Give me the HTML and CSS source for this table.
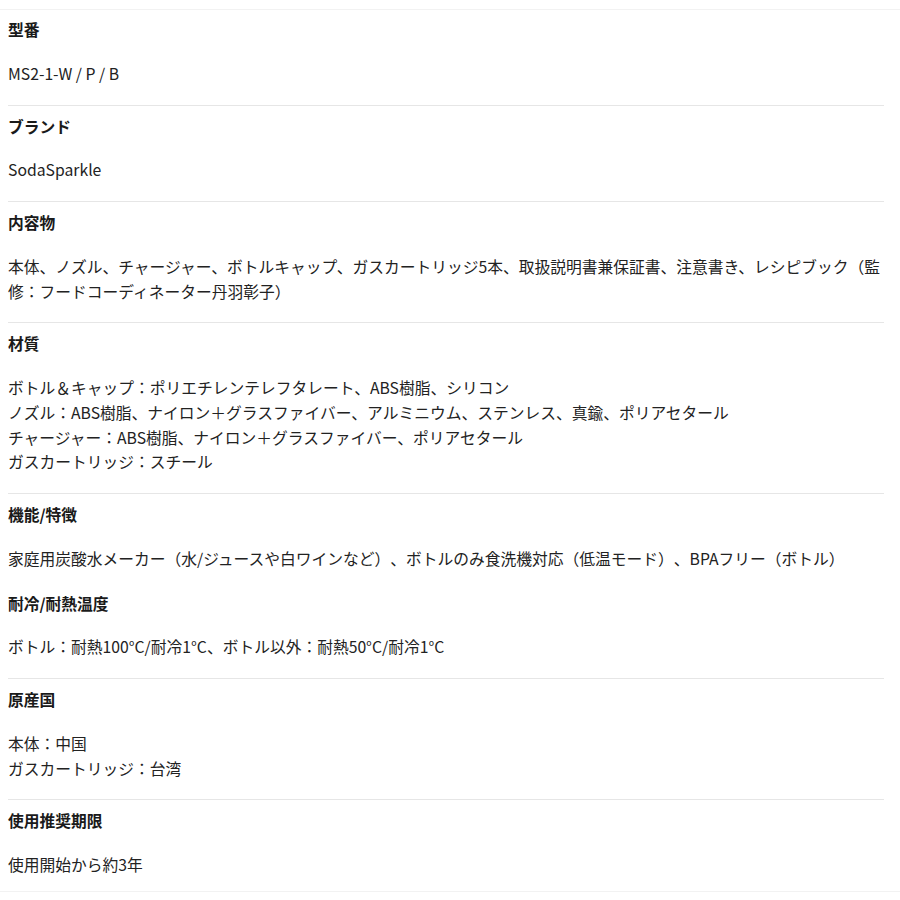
FILE: index.html
```html
<!DOCTYPE html>
<html lang="ja">
<head>
    <meta charset="UTF-8">
    <meta name="viewport" content="width=device-width, initial-scale=1.0">
    <title>商品仕様</title>
    <link rel="stylesheet" href="styles.css">
</head>
<body>
    <section class="spec">
        <dl class="spec-list">
            <div class="spec-item">
                <dt>型番</dt>
                <dd>MS2-1-W / P / B</dd>
            </div>
            <div class="spec-item">
                <dt>ブランド</dt>
                <dd>SodaSparkle</dd>
            </div>
            <div class="spec-item">
                <dt>内容物</dt>
                <dd>本体、ノズル、チャージャー、ボトルキャップ、ガスカートリッジ5本、取扱説明書兼保証書、注意書き、レシピブック（監修：フードコーディネーター丹羽彰子）</dd>
            </div>
            <div class="spec-item">
                <dt>材質</dt>
                <dd>
                    ボトル＆キャップ：ポリエチレンテレフタレート、ABS樹脂、シリコン<br>
                    ノズル：ABS樹脂、ナイロン＋グラスファイバー、アルミニウム、ステンレス、真鍮、ポリアセタール<br>
                    チャージャー：ABS樹脂、ナイロン＋グラスファイバー、ポリアセタール<br>
                    ガスカートリッジ：スチール
                </dd>
            </div>
            <div class="spec-item">
                <dt>機能/特徴</dt>
                <dd>家庭用炭酸水メーカー（水/ジュースや白ワインなど）、ボトルのみ食洗機対応（低温モード）、BPAフリー（ボトル）</dd>
            </div>
            <!-- 機能/特徴 と同じ区切りの中に続く -->
            <div class="spec-item spec-item--joined">
                <dt>耐冷/耐熱温度</dt>
                <dd>ボトル：耐熱100°C/耐冷1°C、ボトル以外：耐熱50°C/耐冷1°C</dd>
            </div>
            <div class="spec-item">
                <dt>原産国</dt>
                <dd>
                    本体：中国<br>
                    ガスカートリッジ：台湾
                </dd>
            </div>
            <div class="spec-item">
                <dt>使用推奨期限</dt>
                <dd>使用開始から約3年</dd>
            </div>
        </dl>
    </section>
</body>
</html>
```

FILE: styles.css
```css
body {
    margin: 0;
    padding: 0;
    background-color: #fff;
    color: #222;
    font-family: "Noto Sans CJK JP", "Noto Sans", sans-serif;
}

.spec {
    margin-top: 9px;
    border-top: 1px solid #f2f2f2;
    border-bottom: 1px solid #f2f2f2;
}

.spec-list {
    margin: 0 16px 0 8px;
    padding: 0;
}

.spec-item {
    padding: 9px 0 18px;
    border-top: 1px solid #e6e6e6;
}

.spec-item:first-child {
    border-top: none;
    padding-top: 8px;
}

.spec-item:last-child {
    padding-bottom: 13px;
}

.spec-item--joined {
    border-top: none;
    padding-top: 2px;
}

.spec-item dt,
.spec-item dd {
    font-size: 15.75px;
    line-height: 24.75px;
    text-spacing-trim: space-all;
}

.spec-item dt {
    margin: 0 0 19px;
    font-weight: bold;
    color: #1a1a1a;
}

.spec-item dd {
    margin: 0;
    color: #222;
}
```
